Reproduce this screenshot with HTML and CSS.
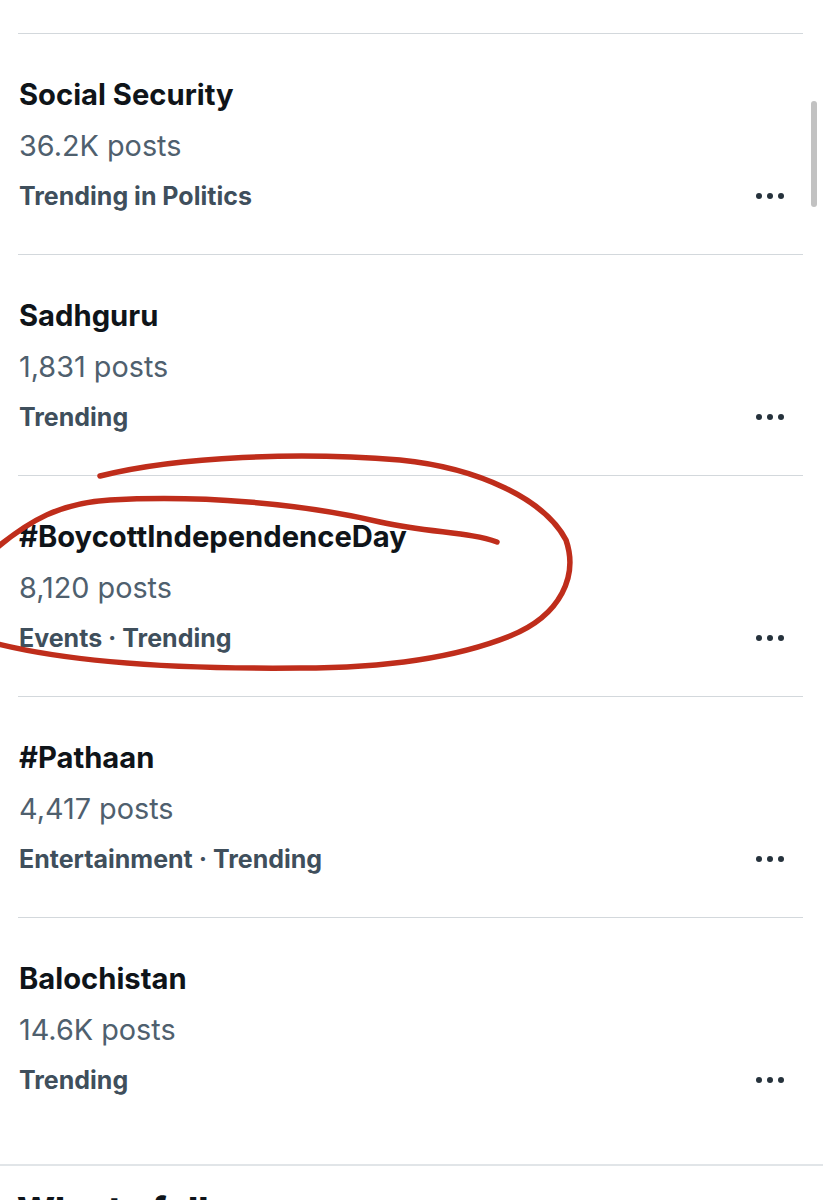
FILE: index.html
```html
<!DOCTYPE html>
<html lang="en">
<head>
<meta charset="utf-8">
<title>Trends</title>
<link rel="stylesheet" href="styles.css">
</head>
<body>
<div class="page">
  <div class="top-space"></div>
  <ul class="trends">
    <li class="trend">
      <div class="title">Social Security</div>
      <div class="count">36.2K posts</div>
      <div class="meta-row"><span class="meta">Trending in Politics</span><span class="more"><i></i><i></i><i></i></span></div>
    </li>
    <li class="trend">
      <div class="title">Sadhguru</div>
      <div class="count">1,831 posts</div>
      <div class="meta-row"><span class="meta">Trending</span><span class="more"><i></i><i></i><i></i></span></div>
    </li>
    <li class="trend">
      <div class="title">#BoycottIndependenceDay</div>
      <div class="count">8,120 posts</div>
      <div class="meta-row"><span class="meta">Events · Trending</span><span class="more"><i></i><i></i><i></i></span></div>
    </li>
    <li class="trend">
      <div class="title">#Pathaan</div>
      <div class="count">4,417 posts</div>
      <div class="meta-row"><span class="meta">Entertainment · Trending</span><span class="more"><i></i><i></i><i></i></span></div>
    </li>
    <li class="trend">
      <div class="title">Balochistan</div>
      <div class="count">14.6K posts</div>
      <div class="meta-row"><span class="meta">Trending</span><span class="more"><i></i><i></i><i></i></span></div>
    </li>
  </ul>
  <section class="follow">
    <h2 class="follow-title">Who to follow</h2>
  </section>
  <div class="scrollbar"></div>
  <svg class="scribble" width="823" height="1200" viewBox="0 0 823 1200" aria-hidden="true">
    <path d="M100,476 C180,456 300,452 400,460 C480,468 545,500 566,540 C578,575 562,615 510,636 C455,658 380,668 300,668 C200,669 80,665 -6,643" />
    <path d="M-6,550 C30,520 60,503 110,500 C200,495 300,503 380,522 C430,533 470,532 497,542" />
  </svg>
</div>
</body>
</html>
```

FILE: styles.css
```css
* { box-sizing: border-box; }
html, body { margin: 0; padding: 0; background: #ffffff; }
body {
  font-family: Inter, "Noto Sans", "Liberation Sans", sans-serif;
  width: 823px;
  height: 1200px;
  overflow: hidden;
}
.page { position: relative; width: 823px; height: 1200px; }
.top-space { height: 33px; }
.trends {
  list-style: none;
  margin: 0 20px 0 18px;
  padding: 0;
}
.trend {
  border-top: 1px solid #d3d8dc;
  height: 221px;
  padding: 35px 0 0 1px;
}
.title {
  font-size: 29.2px;
  font-weight: 700;
  color: #0f1419;
  line-height: 52px;
}
.count {
  font-size: 28.8px;
  font-weight: 400;
  color: #4f606e;
  line-height: 50px;
}
.meta-row {
  display: flex;
  align-items: center;
  justify-content: space-between;
  line-height: 50px;
  padding-right: 19px;
}
.meta {
  font-size: 25px;
  font-weight: 700;
  color: #3f4f5c;
}
.more { display: flex; gap: 5px; align-items: center; }
.more i {
  display: block;
  width: 6px;
  height: 6px;
  border-radius: 50%;
  background: #26323c;
}
.follow {
  border-top: 2px solid #e1e5e8;
  margin-top: 26px;
  padding: 22px 0 0 17px;
}
.follow-title {
  margin: 0;
  font-size: 36px;
  font-weight: 800;
  color: #0f1419;
  line-height: 44px;
}
.scrollbar {
  position: absolute;
  left: 811px;
  top: 101px;
  width: 6px;
  height: 106px;
  border-radius: 3px;
  background: #c2c2c2;
}
.scribble {
  position: absolute;
  left: 0;
  top: 0;
  pointer-events: none;
}
.scribble path {
  fill: none;
  stroke: #bf2d1b;
  stroke-width: 5.5;
  stroke-linecap: round;
  stroke-linejoin: round;
}
```
